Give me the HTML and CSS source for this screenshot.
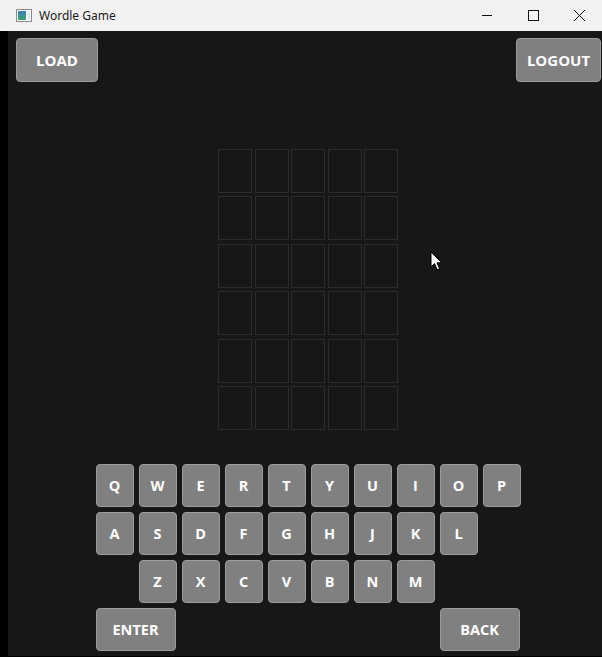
FILE: index.html
```html
<!DOCTYPE html>
<html>
<head>
<meta charset="utf-8">
<title>Wordle Game</title>
<link rel="stylesheet" href="styles.css">
</head>
<body>
<div class="window">
  <div class="titlebar">
    <svg class="app-icon" width="16" height="14" viewBox="0 0 16 14">
      <rect x="0.5" y="0.5" width="15" height="12" fill="#fff" stroke="#8a8a8a"/>
      <defs><linearGradient id="g" x1="0" y1="0" x2="0" y2="1"><stop offset="0" stop-color="#3d7fc4"/><stop offset="1" stop-color="#3aa46a"/></linearGradient></defs>
      <rect x="2" y="2" width="8" height="9" fill="url(#g)"/>
      <rect x="11" y="2" width="3" height="9" fill="#e4ecf2"/>
    </svg>
    <span class="title">Wordle Game</span>
    <div class="controls">
      <svg width="46" height="31" viewBox="0 0 46 31"><line x1="18" y1="15.5" x2="28" y2="15.5" stroke="#111" stroke-width="1"/></svg>
      <svg width="46" height="31" viewBox="0 0 46 31"><rect x="18.5" y="10.5" width="10" height="10" fill="none" stroke="#111" stroke-width="1"/></svg>
      <svg width="46" height="31" viewBox="0 0 46 31"><path d="M18 10 L29 21 M29 10 L18 21" stroke="#111" stroke-width="1"/></svg>
    </div>
  </div>
  <div class="client">
    <div class="strip"></div>
    <main class="content">
      <div class="topbar">
        <button class="btn btn-top">LOAD</button>
        <button class="btn btn-top btn-logout">LOGOUT</button>
      </div>
      <div class="board">
        <div class="cell"></div><div class="cell"></div><div class="cell"></div><div class="cell"></div><div class="cell"></div>
        <div class="cell"></div><div class="cell"></div><div class="cell"></div><div class="cell"></div><div class="cell"></div>
        <div class="cell"></div><div class="cell"></div><div class="cell"></div><div class="cell"></div><div class="cell"></div>
        <div class="cell"></div><div class="cell"></div><div class="cell"></div><div class="cell"></div><div class="cell"></div>
        <div class="cell"></div><div class="cell"></div><div class="cell"></div><div class="cell"></div><div class="cell"></div>
        <div class="cell"></div><div class="cell"></div><div class="cell"></div><div class="cell"></div><div class="cell"></div>
      </div>
      <div class="keyboard">
        <button class="btn key">Q</button><button class="btn key">W</button><button class="btn key">E</button><button class="btn key">R</button><button class="btn key">T</button><button class="btn key">Y</button><button class="btn key">U</button><button class="btn key">I</button><button class="btn key">O</button><button class="btn key">P</button>
        <button class="btn key">A</button><button class="btn key">S</button><button class="btn key">D</button><button class="btn key">F</button><button class="btn key">G</button><button class="btn key">H</button><button class="btn key">J</button><button class="btn key">K</button><button class="btn key">L</button>
        <button class="btn key row3-start">Z</button><button class="btn key">X</button><button class="btn key">C</button><button class="btn key">V</button><button class="btn key">B</button><button class="btn key">N</button><button class="btn key">M</button>
        <button class="btn key wide enter">ENTER</button><button class="btn key wide back">BACK</button>
      </div>
    </main>
    <svg class="cursor" width="14" height="21" viewBox="0 0 14 21">
      <path d="M1 1 L1 16 L4.5 12.6 L7.2 18.8 L9.6 17.8 L7 11.8 L11.8 11.8 Z" fill="#fff" stroke="#000" stroke-width="1" stroke-linejoin="round"/>
    </svg>
  </div>
</div>
</body>
</html>
```

FILE: styles.css
```css
* { box-sizing: border-box; }
html, body { margin: 0; padding: 0; }
body {
  width: 602px;
  height: 657px;
  overflow: hidden;
  background: #000;
  font-family: "Open Sans", "Noto Sans", sans-serif;
}
.window { display: flex; flex-direction: column; height: 657px; }
.titlebar {
  height: 31px;
  background: #f2f2f2;
  display: flex;
  align-items: center;
  flex-shrink: 0;
}
.app-icon { margin-left: 16px; margin-top: 1px; }
.title {
  margin-left: 7px;
  font-family: "Noto Sans", "Open Sans", sans-serif;
  font-size: 12px;
  color: #1a1a1a;
}
.controls { margin-left: auto; display: flex; }
.controls svg { display: block; }
.client {
  position: relative;
  flex: 1;
  display: flex;
  padding-bottom: 1px;
}
.strip { width: 8px; background: #000; flex-shrink: 0; }
.content {
  flex: 1;
  background: #171717;
  padding-left: 6px;
  display: flex;
  flex-direction: column;
  align-items: center;
}
.topbar {
  align-self: stretch;
  display: flex;
  justify-content: space-between;
  padding: 7px 1px 0 2px;
}
.btn {
  background: #808080;
  border: 1px solid #9c9c9c;
  border-radius: 4px;
  color: #fff;
  font-family: "Open Sans", "Noto Sans", sans-serif;
  font-weight: 700;
  font-size: 14.5px;
  padding: 0;
  display: flex;
  align-items: center;
  justify-content: center;
}
.btn-top { width: 82px; height: 44px; font-size: 15px; }
.btn-logout { width: 85px; }
.board {
  margin-top: 67px;
  display: grid;
  grid-template-columns: repeat(5, 34px);
  grid-auto-rows: 44px;
  column-gap: 2.5px;
  row-gap: 3.4px;
}
.cell { border: 1px solid #2b2b2b; }
.keyboard {
  margin-top: 34px;
  display: grid;
  grid-template-columns: repeat(10, 38px);
  grid-auto-rows: 43px;
  gap: 5px;
}
.key { width: 38px; height: 43px; }
.row3-start { grid-column: 2; }
.wide { width: auto; }
.enter { grid-column: 1 / span 2; width: 80px; }
.back { grid-column: 9 / span 2; width: 80px; }
.cursor { position: absolute; left: 430px; top: 220px; }
```
